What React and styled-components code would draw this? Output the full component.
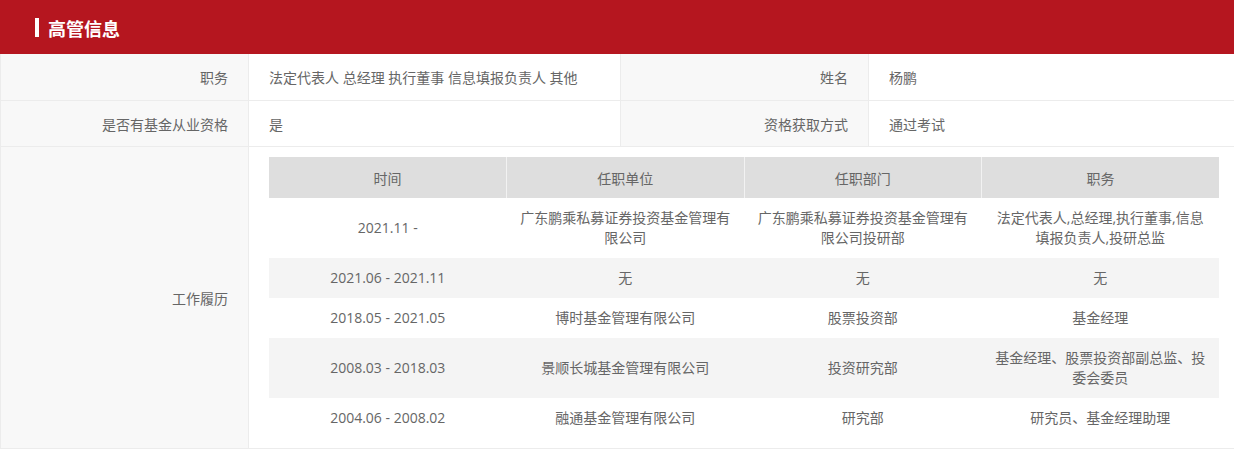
import React from "react";
import styled, { createGlobalStyle } from "styled-components";

const Global = createGlobalStyle`
  html, body { margin: 0; padding: 0; background: #fff; }
  body { font-family: "Open Sans", "Noto Sans CJK SC", sans-serif; color: #666; }
`;

const Section = styled.section`
  width: 1234px;
`;

const Header = styled.header`
  height: 54px;
  background: #b5161f;
  display: flex;
  align-items: center;
  padding-left: 35px;
  gap: 9px;
  box-sizing: border-box;
`;

const Bar = styled.span`
  width: 4px;
  height: 19px;
  background: #fff;
`;

const Title = styled.h2`
  margin: 0;
  font-family: "Noto Sans CJK SC", sans-serif;
  font-size: 18px;
  font-weight: 700;
  color: #fff;
  line-height: 1;
  position: relative;
  top: 1px;
`;

const Grid = styled.div`
  display: grid;
  grid-template-columns: 247px 371px 247px 1fr;
  grid-template-rows: 46px 45px auto;
  gap: 1px;
  background: #ececec;
  padding: 0 0 1px 1px;
`;

const Label = styled.div`
  background: #f8f8f8;
  display: flex;
  align-items: center;
  justify-content: flex-end;
  padding-right: 20px;
  font-size: 14px;
  color: #666;
`;

const Value = styled.div`
  background: #fff;
  display: flex;
  align-items: center;
  padding-left: 20px;
  font-size: 14px;
  color: #666;
  grid-column: ${(p) => (p.$wide ? "2 / 5" : "auto")};
  ${(p) => (p.$wide ? "padding: 10px 15px 10px 20px; display: block;" : "")}
`;

const Table = styled.table`
  width: 100%;
  border-collapse: collapse;
  table-layout: fixed;
  font-size: 14px;
  color: #666;
`;

const Th = styled.th`
  height: 41px;
  padding: 0 10px;
  background: #dedede;
  font-weight: 400;
  text-align: center;
  border-left: 1px solid #f2f2f2;
  &:first-child { border-left: none; }
`;

const Tr = styled.tr`
  background: ${(p) => (p.$striped ? "#f4f4f4" : "#fff")};
`;

const Td = styled.td`
  padding: 10px 10px;
  line-height: 20px;
  text-align: center;
  vertical-align: middle;
`;

const rows = [
  ["2021.11 -", "广东鹏乘私募证券投资基金管理有限公司", "广东鹏乘私募证券投资基金管理有限公司投研部", "法定代表人,总经理,执行董事,信息填报负责人,投研总监"],
  ["2021.06 - 2021.11", "无", "无", "无"],
  ["2018.05 - 2021.05", "博时基金管理有限公司", "股票投资部", "基金经理"],
  ["2008.03 - 2018.03", "景顺长城基金管理有限公司", "投资研究部", "基金经理、股票投资部副总监、投委会委员"],
  ["2004.06 - 2008.02", "融通基金管理有限公司", "研究部", "研究员、基金经理助理"],
];

export default function App() {
  return (
    <Section>
      <Global />
      <Header>
        <Bar />
        <Title>高管信息</Title>
      </Header>
      <Grid>
        <Label>职务</Label>
        <Value>法定代表人 总经理 执行董事 信息填报负责人 其他</Value>
        <Label>姓名</Label>
        <Value>杨鹏</Value>
        <Label>是否有基金从业资格</Label>
        <Value>是</Value>
        <Label>资格获取方式</Label>
        <Value>通过考试</Value>
        <Label>工作履历</Label>
        <Value $wide>
          <Table>
            <thead>
              <tr>
                <Th>时间</Th>
                <Th>任职单位</Th>
                <Th>任职部门</Th>
                <Th>职务</Th>
              </tr>
            </thead>
            <tbody>
              {rows.map((r, i) => (
                <Tr key={i} $striped={i % 2 === 1}>
                  {r.map((c, j) => (
                    <Td key={j}>{c}</Td>
                  ))}
                </Tr>
              ))}
            </tbody>
          </Table>
        </Value>
      </Grid>
    </Section>
  );
}
